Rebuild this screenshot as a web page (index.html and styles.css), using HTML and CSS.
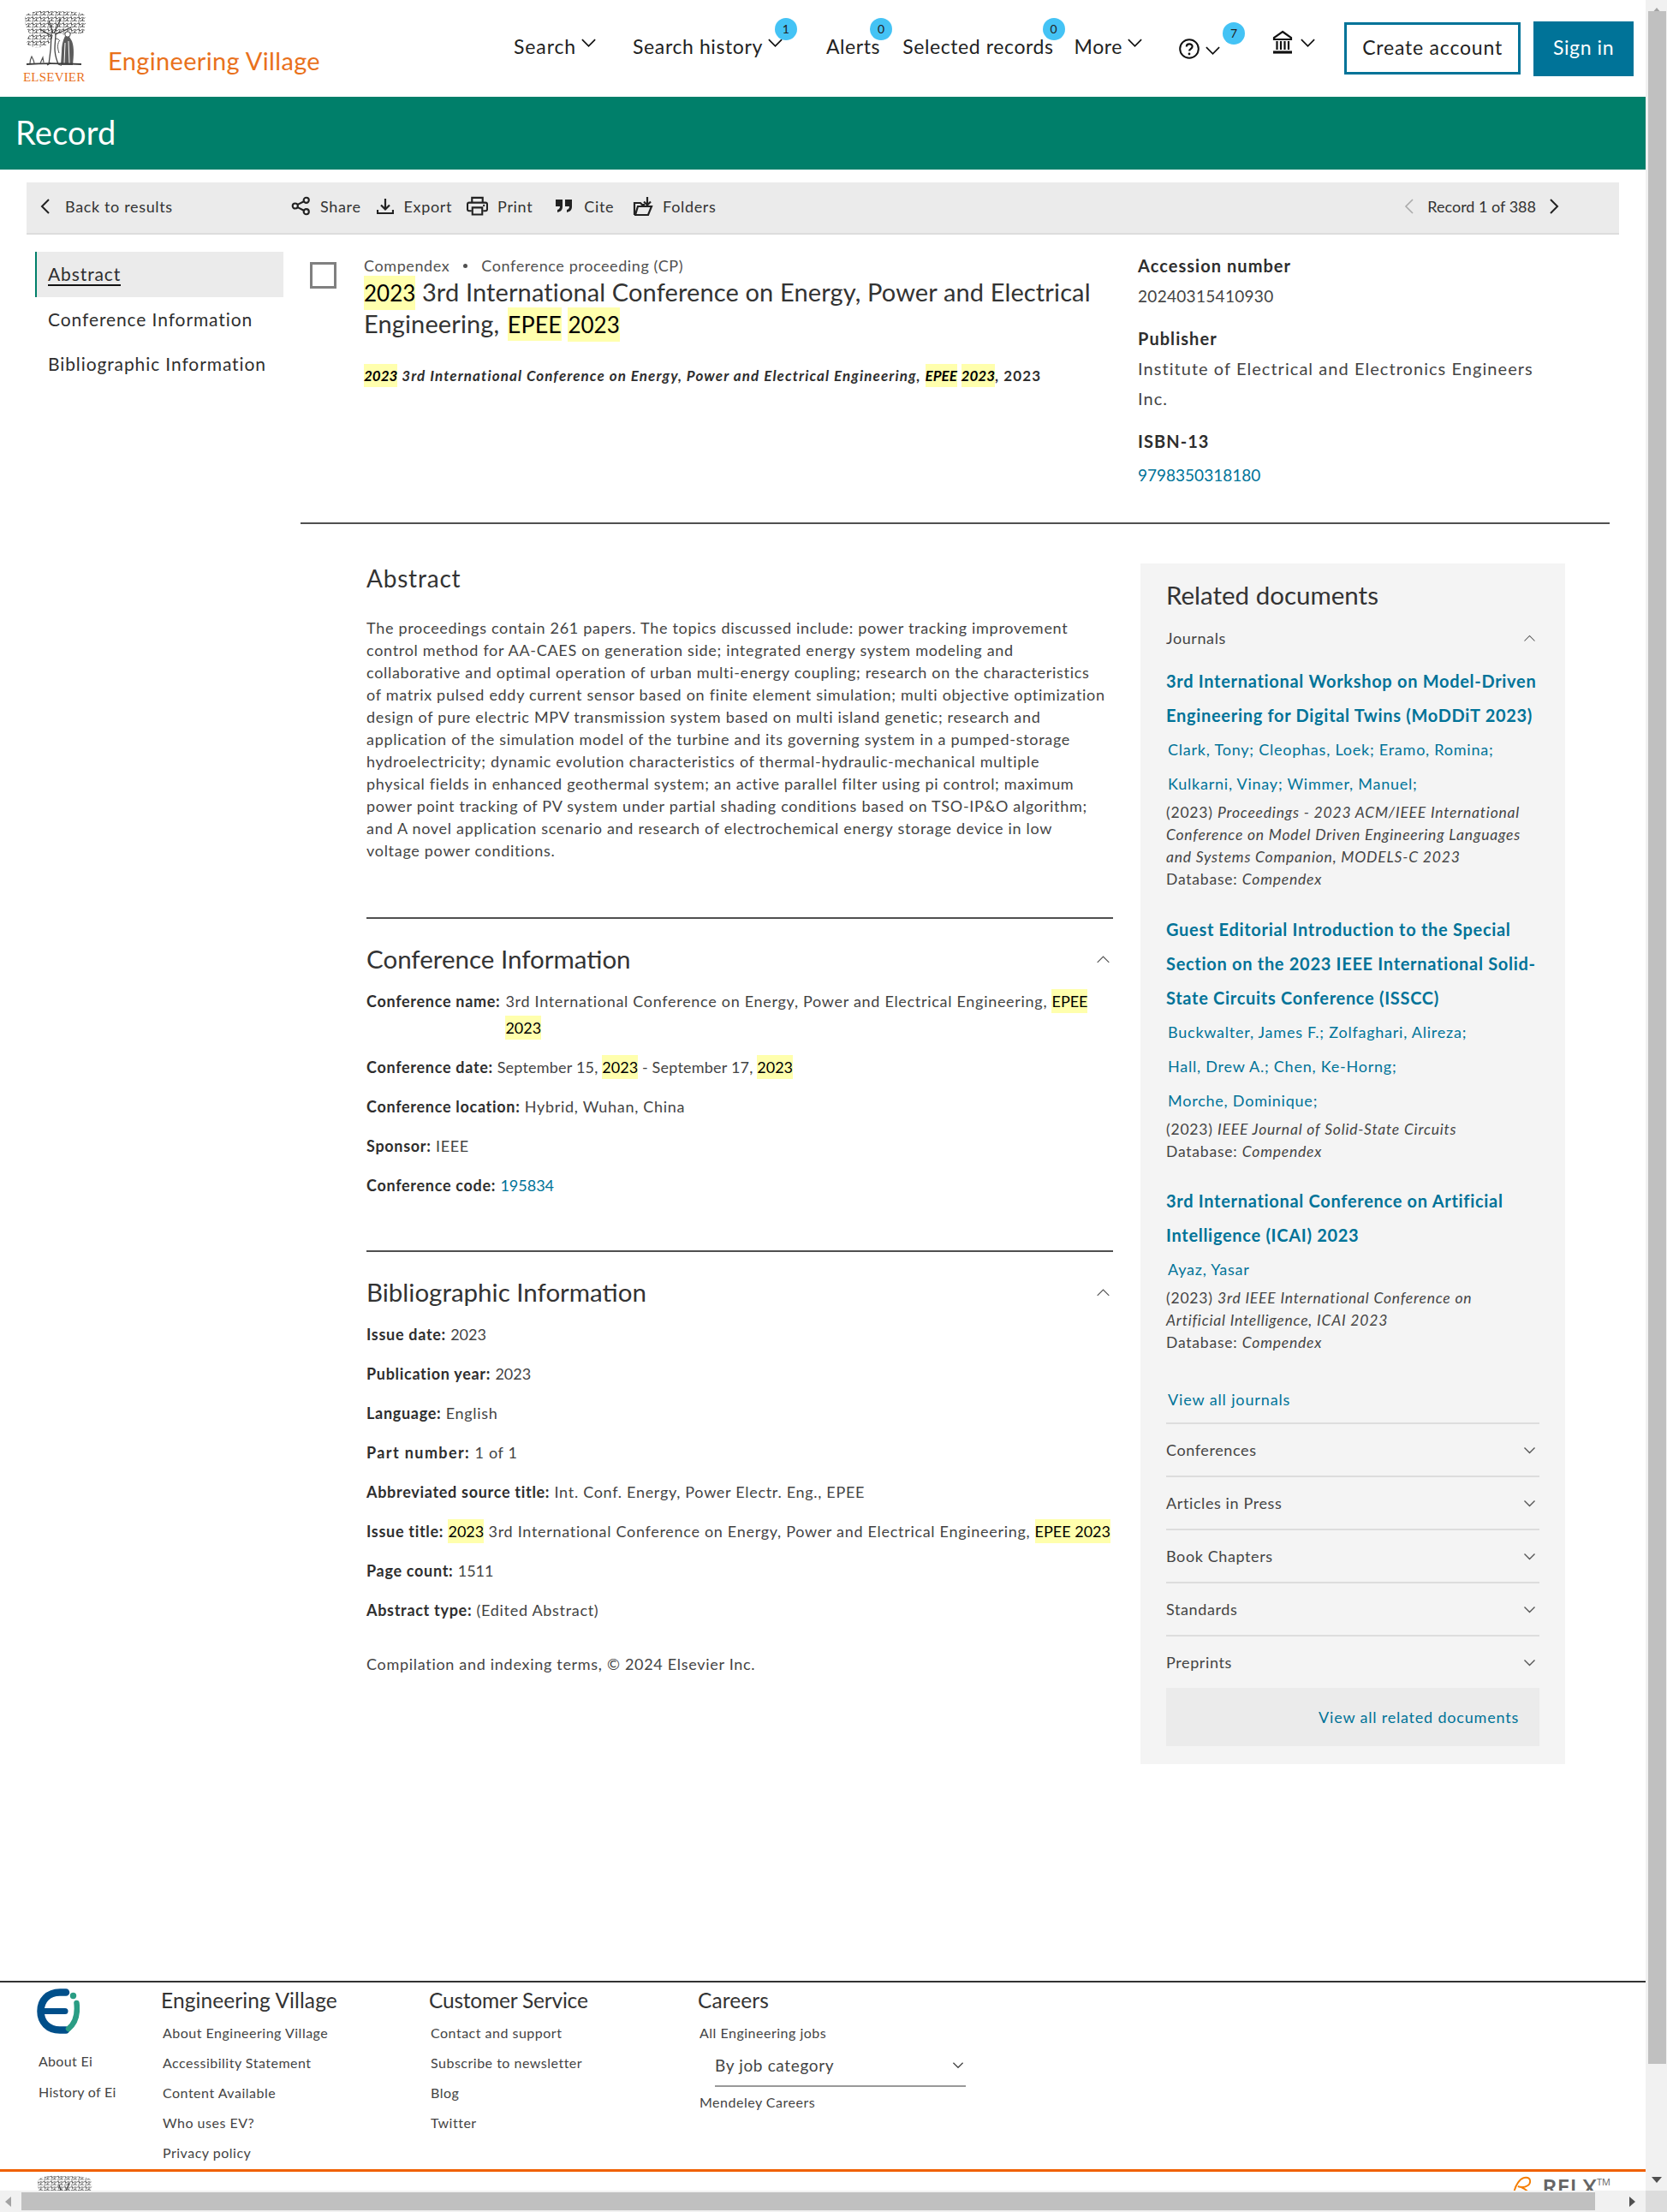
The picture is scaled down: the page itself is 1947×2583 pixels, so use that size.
FILE: index.html
```html
<!DOCTYPE html>
<html lang="en">
<head>
<meta charset="utf-8">
<title>Record - Engineering Village</title>
<link rel="stylesheet" href="styles.css">
</head>
<body>
<svg class="defs" width="0" height="0" aria-hidden="true">
  <defs>
    <pattern id="scribble" width="9" height="7" patternUnits="userSpaceOnUse">
      <path d="M0 2c2-2 3 2 5 0s3 1 4 0M1 6c2-2 3 1 4-1s3 2 4 0M2 0l1 4M7 2l-1 4" fill="none" stroke="#4d4d4d" stroke-width="1"/>
    </pattern>
  </defs>
  <symbol id="chev-d" viewBox="0 0 20 12"><path d="M2 2l8 8 8-8" fill="none" stroke="currentColor" stroke-width="1.8"/></symbol>
  <symbol id="chev-u" viewBox="0 0 20 12"><path d="M2 10l8-8 8 8" fill="none" stroke="currentColor" stroke-width="1.4"/></symbol>
  <symbol id="tree" viewBox="0 0 74 66">
    <path d="M3 6C8 1 20 0 34 1s32-1 38 5c2 8 1 15-1 20-8 3-16 1-22 3-6-1-10 0-14 0-2 6-3 10-10 13-7 2-17 2-20-2-2-5 1-9 3-12C4 22 1 14 3 6z" fill="url(#scribble)"/>
    <g fill="none" stroke="#444" stroke-width="1.300">
      <path d="M35 27L30 12M36 27L44 10M33 30L20 22M38 28L56 20"/>
      <path d="M30 63c2-12 3-24 3-36M41 63c-2-6-4-10-4-18 0-6 1-12 1-18"/>
      <path d="M28 64c2-1 3-1 4-3M41 63c2 1 3 1 4 1"/>
    </g>
    <path d="M49 30c-3 6-4 12-4 18l-1 16h14c1-10 2-20-1-28l-3-5z" fill="#5c5c5c"/>
    <path d="M49 38l-1 24M53 36l1 26" stroke="#fff" stroke-width="1"/>
    <circle cx="52" cy="28" r="3.200" fill="#fff" stroke="#444" stroke-width="1"/>
    <path d="M42 36c-2 4-2 8 0 14M37 33c3 0 5 1 6 3" fill="none" stroke="#555" stroke-width="1"/>
    <path d="M4 63c14-1 44-1 64 0" fill="none" stroke="#3d3d3d" stroke-width="1.800"/>
    <path d="M8 62c0-4 1-6 2-8 1 2 3 5 3 8M20 62l3-7 1 6" fill="none" stroke="#555" stroke-width="1.200"/>
  </symbol>
</svg>
<div class="shell">
  <div class="page">
    <header class="top">
      <a class="brand">
        <span class="brand-mark">
          <svg class="tree" width="74" height="66"><use href="#tree"/></svg>
          <span class="brand-els">ELSEVIER</span>
        </span>
        <span class="brand-name">Engineering Village</span>
      </a>
      <nav class="nav">
        <span class="nav-item nav-search">Search<svg class="nav-chev"><use href="#chev-d"/></svg></span>
        <span class="nav-item nav-history">Search history<svg class="nav-chev"><use href="#chev-d"/></svg><span class="badge badge-a">1</span></span>
        <span class="nav-item nav-alerts">Alerts<span class="badge badge-b">0</span></span>
        <span class="nav-item nav-selected">Selected records<span class="badge badge-c">0</span></span>
        <span class="nav-item nav-more">More<svg class="nav-chev"><use href="#chev-d"/></svg></span>
        <span class="nav-item nav-help">
          <svg class="help-ico" viewBox="0 0 24 24" width="24" height="24"><circle cx="12" cy="12" r="10.800" fill="none" stroke="#111" stroke-width="2"/><path d="M8.800 9.500c0-4.200 6.800-4.200 6.800-.2 0 2.700-3.500 2.800-3.500 5.200" fill="none" stroke="#111" stroke-width="2.200"/><circle cx="12" cy="18" r="1.400" fill="#111"/></svg>
          <svg class="nav-chev help-chev"><use href="#chev-d"/></svg><span class="badge badge-d">7</span>
        </span>
        <span class="nav-item nav-inst">
          <svg class="inst-ico" viewBox="0 0 24 28" width="24" height="28"><path d="M12 2L22 9v2H2V9z" fill="none" stroke="#111" stroke-width="2.200"/><path d="M5.500 13v10M10 13v10M14.500 13v10M19 13v10" stroke="#111" stroke-width="2.200"/><path d="M1 26h22" stroke="#111" stroke-width="3.200"/></svg>
          <svg class="nav-chev"><use href="#chev-d"/></svg>
        </span>
        <a class="btn-create">Create account</a>
        <a class="btn-signin">Sign in</a>
      </nav>
    </header>

    <div class="band"><h1 class="band-title">Record</h1></div>

    <div class="toolbar">
      <a class="tool tool-back"><svg viewBox="0 0 12 20" width="12" height="20"><path d="M10 2L2 10l8 8" fill="none" stroke="#222" stroke-width="2"/></svg><span>Back to results</span></a>
      <a class="tool tool-share">
        <svg viewBox="0 0 24 24" width="23" height="23"><g fill="none" stroke="#222" stroke-width="2.200"><circle cx="18.500" cy="5" r="3.200"/><circle cx="5" cy="12" r="3.200"/><circle cx="18.500" cy="19" r="3.200"/><path d="M8 10.300l7.500-3.800M8 13.700l7.500 3.800"/></g></svg><span>Share</span></a>
      <a class="tool tool-export">
        <svg viewBox="0 0 20 20" width="20" height="20"><g fill="none" stroke="#222" stroke-width="2.200"><path d="M10 1v12M5 8.500l5 5 5-5"/><path d="M1 14v4h18v-4"/></g></svg><span>Export</span></a>
      <a class="tool tool-print">
        <svg viewBox="0 0 26 24" width="25" height="23"><g fill="none" stroke="#222" stroke-width="2.200"><path d="M6.500 8V2h13v6M6 18H3q-2 0-2-2v-6q0-2 2-2h20q2 0 2 2v6q0 2-2 2h-3"/><path d="M7 14h12v8.500H7z"/></g><circle cx="21" cy="11.500" r="1.200" fill="#222"/></svg><span>Print</span></a>
      <a class="tool tool-cite">
        <svg viewBox="0 0 22 20" width="22" height="20"><path d="M1 2h8v8c0 4-2 6-6 7v-3c2-.5 3-2 3-4H1zM12 2h8v8c0 4-2 6-6 7v-3c2-.5 3-2 3-4h-5z" fill="#222"/></svg><span>Cite</span></a>
      <a class="tool tool-folders">
        <svg viewBox="0 0 24 24" width="24" height="24"><g fill="none" stroke="#222" stroke-width="2.200"><path d="M2 22V8h7l2 2h3M2 22h16l4-10H6L3 22"/><path d="M17 1v9M13 6.500l4 4 4-4"/></g></svg><span>Folders</span></a>
      <div class="pager">
        <svg viewBox="0 0 12 20" width="12" height="20"><path d="M10 2L2 10l8 8" fill="none" stroke="#aaa" stroke-width="1.600"/></svg>
        <span class="pager-text">Record 1 of 388</span>
        <svg viewBox="0 0 12 20" width="12" height="20"><path d="M2 2l8 8-8 8" fill="none" stroke="#222" stroke-width="2"/></svg>
      </div>
    </div>

    <main class="main">
      <section class="record">
        <ul class="side">
          <li class="side-item side-on"><span class="side-link">Abstract</span></li>
          <li class="side-item">Conference Information</li>
          <li class="side-item">Bibliographic Information</li>
        </ul>
        <span class="check"></span>
        <div class="rec-main">
          <p class="rec-type"><span>Compendex</span><span class="rec-dot"></span><span>Conference proceeding (CP)</span></p>
          <h2 class="rec-title"><mark class="digits">2023</mark> 3rd International Conference on Energy, Power and Electrical Engineering, <mark class="caps">EPEE</mark> <mark class="digits">2023</mark></h2>
          <p class="rec-src"><mark>2023</mark> 3rd International Conference on Energy, Power and Electrical Engineering, <mark>EPEE</mark> <mark>2023</mark><span class="rec-year">, 2023</span></p>
        </div>
        <dl class="rec-facts">
          <dt>Accession number</dt><dd class="accession">20240315410930</dd>
          <dt>Publisher</dt><dd>Institute of Electrical and Electronics Engineers Inc.</dd>
          <dt>ISBN-13</dt><dd class="isbn"><a class="link">9798350318180</a></dd>
        </dl>
      </section>
      <hr class="rule">
      <section class="content">
        <article class="left">
          <h3 class="abs-head">Abstract</h3>
          <p class="abs-text">The proceedings contain 261 papers. The topics discussed include: power tracking improvement control method for AA-CAES on generation side; integrated energy system modeling and<br>collaborative and optimal operation of urban multi-energy coupling; research on the characteristics<br>of matrix pulsed eddy current sensor based on finite element simulation; multi objective optimization<br>design of pure electric MPV transmission system based on multi island genetic; research and<br>application of the simulation model of the turbine and its governing system in a pumped-storage<br>hydroelectricity; dynamic evolution characteristics of thermal-hydraulic-mechanical multiple<br>physical fields in enhanced geothermal system; an active parallel filter using pi control; maximum<br>power point tracking of PV system under partial shading conditions based on TSO-IP&amp;O algorithm;<br>and A novel application scenario and research of electrochemical energy storage device in low<br>voltage power conditions.</p>

          <div class="sec">
            <div class="sec-head"><h3>Conference Information</h3><svg class="sec-chev"><use href="#chev-u"/></svg></div>
            <div class="row row-flex"><b>Conference name:</b><span>3rd International Conference on Energy, Power and Electrical Engineering, <mark>EPEE</mark> <mark>2023</mark></span></div>
            <div class="row row-date"><b>Conference date:</b> September 15, <mark>2023</mark> - September 17, <mark>2023</mark></div>
            <div class="row"><b>Conference location:</b> Hybrid, Wuhan, China</div>
            <div class="row"><b>Sponsor:</b> IEEE</div>
            <div class="row"><b>Conference code:</b> <a class="link num">195834</a></div>
          </div>

          <div class="sec sec-bib">
            <div class="sec-head"><h3>Bibliographic Information</h3><svg class="sec-chev"><use href="#chev-u"/></svg></div>
            <div class="row"><b>Issue date:</b> <span class="num">2023</span></div>
            <div class="row"><b>Publication year:</b> <span class="num">2023</span></div>
            <div class="row"><b>Language:</b> English</div>
            <div class="row"><b class="wide">Part number:</b> 1 of 1</div>
            <div class="row"><b>Abbreviated source title:</b> Int. Conf. Energy, Power Electr. Eng., EPEE</div>
            <div class="row"><b>Issue title:</b> <mark>2023</mark> 3rd International Conference on Energy, Power and Electrical Engineering, <mark>EPEE 2023</mark></div>
            <div class="row"><b>Page count:</b> <span class="num">1511</span></div>
            <div class="row"><b>Abstract type:</b> (Edited Abstract)</div>
            <p class="row copyright">Compilation and indexing terms, © 2024 Elsevier Inc.</p>
          </div>
        </article>

        <aside class="panel">
          <h3 class="panel-head">Related documents</h3>
          <div class="acc-open"><span>Journals</span><svg class="acc-chev"><use href="#chev-u"/></svg></div>

          <div class="doc">
            <a class="doc-title">3rd International Workshop on Model-Driven Engineering for Digital Twins (MoDDiT 2023)</a>
            <p class="doc-auth">Clark, Tony; Cleophas, Loek; Eramo, Romina;</p>
            <p class="doc-auth">Kulkarni, Vinay; Wimmer, Manuel;</p>
            <p class="doc-meta">(2023) <i>Proceedings - 2023 ACM/IEEE International Conference on Model Driven Engineering Languages<br>and Systems Companion, MODELS-C 2023</i><br>Database: <i>Compendex</i></p>
          </div>
          <div class="doc">
            <a class="doc-title">Guest Editorial Introduction to the Special Section on the 2023 IEEE International Solid-State Circuits Conference (ISSCC)</a>
            <p class="doc-auth">Buckwalter, James F.; Zolfaghari, Alireza;</p>
            <p class="doc-auth">Hall, Drew A.; Chen, Ke-Horng;</p>
            <p class="doc-auth">Morche, Dominique;</p>
            <p class="doc-meta">(2023) <i>IEEE Journal of Solid-State Circuits</i><br>Database: <i>Compendex</i></p>
          </div>
          <div class="doc">
            <a class="doc-title">3rd International Conference on Artificial Intelligence (ICAI) 2023</a>
            <p class="doc-auth">Ayaz, Yasar</p>
            <p class="doc-meta">(2023) <i>3rd IEEE International Conference on<br>Artificial Intelligence, ICAI 2023</i><br>Database: <i>Compendex</i></p>
          </div>
          <a class="link view-j">View all journals</a>
          <div class="acc"><span>Conferences</span><svg class="acc-chev"><use href="#chev-d"/></svg></div>
          <div class="acc"><span>Articles in Press</span><svg class="acc-chev"><use href="#chev-d"/></svg></div>
          <div class="acc"><span>Book Chapters</span><svg class="acc-chev"><use href="#chev-d"/></svg></div>
          <div class="acc"><span>Standards</span><svg class="acc-chev"><use href="#chev-d"/></svg></div>
          <div class="acc"><span>Preprints</span><svg class="acc-chev"><use href="#chev-d"/></svg></div>
          <div class="view-all"><a class="link">View all related documents</a></div>
        </aside>
      </section>
    </main>

    <footer class="foot">
      <div class="foot-cols">
        <div class="fc fc-ei">
          <svg class="ei" viewBox="0 0 50 53" width="50" height="53">
            <path d="M34 4.500H27C13 4.500 4.500 14 4.500 26.500S13 48.500 27 48.500h7" fill="none" stroke="#004f8a" stroke-width="8.500" stroke-linecap="round"/>
            <path d="M8 26.500h25" stroke="#004f8a" stroke-width="7" stroke-linecap="round"/>
            <circle cx="42.500" cy="8.500" r="3.700" fill="#2a9d84"/>
            <path d="M46.500 17c1.500 13-2 24-9.500 30" fill="none" stroke="#2a9d84" stroke-width="6.500" stroke-linecap="round"/>
          </svg>
          <a>About Ei</a><a>History of Ei</a>
        </div>
        <div class="fc fc-ev">
          <h4>Engineering Village</h4>
          <a>About Engineering Village</a><a>Accessibility Statement</a><a>Content Available</a><a>Who uses EV?</a><a>Privacy policy</a>
        </div>
        <div class="fc fc-cs">
          <h4>Customer Service</h4>
          <a>Contact and support</a><a>Subscribe to newsletter</a><a>Blog</a><a>Twitter</a>
        </div>
        <div class="fc fc-ca">
          <h4>Careers</h4>
          <a>All Engineering jobs</a>
          <div class="job-sel"><span>By job category</span><svg class="job-chev"><use href="#chev-d"/></svg></div>
          <a class="fc-after">Mendeley Careers</a>
        </div>
      </div>
      <div class="foot-strip">
        <svg class="strip-tree" width="66" height="59"><use href="#tree"/></svg>
        <span class="relx">
          <svg viewBox="0 0 30 30" width="26" height="26"><path d="M3 26C5 12 12 2 20 2c7 0 7 8 2 11s-10 2-13 1c5 1 12 4 18 12" fill="none" stroke="#f57d00" stroke-width="2.200"/></svg>
          <span class="relx-t">RELX<sup>TM</sup></span>
        </span>
      </div>
    </footer>
  </div>

  <div class="vbar">
    <span class="arrow arrow-up"></span>
    <span class="vthumb"></span>
    <span class="arrow arrow-down"></span>
  </div>
  <div class="hbar">
    <span class="arrow arrow-left"></span>
    <span class="hthumb"></span>
    <span class="arrow arrow-right"></span>
  </div>
  <div class="corner"></div>
</div>
</body>
</html>
```

FILE: styles.css
```css
* { box-sizing: border-box; }
html, body { margin: 0; padding: 0; height: 100%; overflow: hidden; }
body { font-family: Lato, "Open Sans", sans-serif; color: #2e2e2e; background: #fff; }
.defs { position: absolute; }
h1, h2, h3, h4, p, ul, dl, dd { margin: 0; padding: 0; font-weight: 400; }
ul { list-style: none; }
a { color: inherit; text-decoration: none; }
mark { background: #ffffad; color: #000; padding: 3px 0; letter-spacing: 0; }
.link { color: #007398; }
.num { letter-spacing: 0; }

.shell { display: grid; grid-template-columns: 1fr 25px; grid-template-rows: 1fr 25px; width: 1947px; height: 2583px; }
.page { display: flex; flex-direction: column; overflow: hidden; min-width: 0; min-height: 0; }

/* header */
.top { display: flex; flex: none; height: 113px; }
.brand { display: flex; flex: none; width: 590px; padding: 12px 0 0 27px; }
.brand-mark { display: flex; flex-direction: column; width: 74px; }
.tree { display: block; }
.brand-els { font: 15px/18px "Liberation Serif", serif; color: #e9711c; margin-top: 3px; letter-spacing: .2px; white-space: nowrap; }
.brand-name { font-size: 29px; line-height: 36px; color: #e9711c; margin: 41px 0 0 25px; letter-spacing: .35px; white-space: nowrap; }
.nav { display: flex; align-items: flex-start; flex: 1; font-size: 23px; letter-spacing: .6px; color: #222; padding-top: 38px; }
.nav-item { position: relative; display: flex; flex: none; line-height: 32px; white-space: nowrap; }
.nav-chev { width: 19px; height: 12px; margin: 6px 0 0 5px; color: #111; }
.nav-search { margin-left: 10px; letter-spacing: .9px; }
.nav-history { margin-left: 42px; }
.nav-alerts { margin-left: 50px; }
.nav-selected { margin-left: 26px; }
.nav-more { margin-left: 24px; }
.nav-help { margin-left: 42px; padding-top: 7px; }
.help-chev { margin: 8px 0 0 6px; }
.nav-inst { margin-left: 60px; }
.inst-ico { margin-top: -3px; }
.nav-inst .nav-chev { margin: 6px 0 0 8px; }
.badge { position: absolute; width: 26px; height: 26px; border-radius: 50%; background: #44c3f5; color: #222; font-size: 14px; letter-spacing: 0; line-height: 26px; text-align: center; }
.badge-a { top: -17px; right: -16px; }
.badge-b { top: -17px; right: -14px; }
.badge-c { top: -17px; right: -13px; }
.badge-d { top: -12px; right: -28px; }
.btn-create { flex: none; width: 206px; height: 61px; margin: -12px 0 0 33px; border: 3px solid #007398; line-height: 52px; letter-spacing: .8px; text-align: center; color: #222; }
.btn-signin { flex: none; width: 117px; height: 64px; margin: -13px 0 0 15px; background: #007398; color: #fff; line-height: 61px; text-align: center; }

.band { flex: none; height: 85px; background: #007f6a; padding-left: 18px; }
.band-title { color: #fff; font-size: 38px; line-height: 82px; letter-spacing: .2px; }

/* toolbar */
.toolbar { display: flex; align-items: center; flex: none; width: 1860px; height: 61px; margin: 15px 0 0 31px; padding-bottom: 4px; background: #ebebeb; border-bottom: 2px solid #ddd; font-size: 18px; letter-spacing: .65px; color: #333; }
.tool { display: flex; align-items: center; gap: 11px; flex: none; white-space: nowrap; }
.tool-back { margin-left: 16px; width: 293px; gap: 17px; }
.tool-export { margin-left: 18px; gap: 12px; }
.tool-print { margin-left: 17px; }
.tool-cite { margin-left: 26px; gap: 12px; }
.tool-folders { margin-left: 22px; }
.pager { display: flex; align-items: center; gap: 15px; margin-left: auto; margin-right: 70px; letter-spacing: 0; }

/* record head */
.main { flex: 1; min-height: 0; }
.record { display: flex; height: 336px; padding: 20px 0 0 41px; }
.side { flex: none; width: 290px; font-size: 21px; letter-spacing: .9px; }
.side-item { height: 52.5px; line-height: 52px; padding-left: 15px; }
.side-on { background: #ebebeb; border-left: 2px solid #007f6a; padding-left: 13px; }
.side-link { border-bottom: 2px solid #111; }
.check { flex: none; width: 31px; height: 31px; margin: 12px 0 0 31px; border: 3px solid #808080; }
.rec-main { flex: none; width: 880px; margin-left: 32px; }
.rec-type { display: flex; align-items: center; font-size: 18px; line-height: 22px; letter-spacing: .6px; color: #505050; margin-top: 5px; }
.rec-dot { width: 5px; height: 5px; margin: 0 16px; border-radius: 50%; background: #505050; }
.rec-title { font-size: 29px; line-height: 36px; letter-spacing: .13px; margin-top: 2px; color: #333; }
.rec-title mark { padding: 2px 0; }
.rec-title .digits { font-size: 26px; padding: 4px 0; }
.rec-title .caps { font-size: 27px; padding: 3px 0; margin-left: 2px; }
.rec-src { font-size: 17px; line-height: 22px; letter-spacing: 1.100px; margin-top: 31px; font-weight: 700; font-style: italic; color: #2e2e2e; white-space: nowrap; }
.rec-year { font-style: normal; }
.rec-facts { flex: none; width: 480px; margin-left: 24px; font-size: 20px; letter-spacing: 1.050px; line-height: 35px; color: #444; }
.rec-facts dt { font-weight: 700; line-height: 26px; margin-top: 3px; color: #2e2e2e; }
.rec-facts dd { margin-bottom: 19px; margin-top: 5px; }
.rec-facts .accession { font-size: 19px; letter-spacing: .3px; }
.rec-facts .isbn { font-size: 19px; letter-spacing: 0; margin-top: 9px; }
.rule { height: 2px; width: 1529px; margin: 0 0 0 351px; background: #505050; border: 0; }

/* content */
.content { display: flex; padding: 46px 0 0 428px; align-items: flex-start; }
.left { flex: none; width: 872px; }
.abs-head { font-size: 28px; line-height: 34px; letter-spacing: .8px; color: #333; }
.abs-text { font-size: 18px; line-height: 26px; letter-spacing: .7px; margin-top: 28px; color: #444; }
.sec { margin-top: 65px; border-top: 2px solid #505050; padding-top: 29px; }
.sec-bib { margin-top: 60px; }
.sec-head { display: flex; align-items: center; justify-content: space-between; height: 36px; margin-bottom: 16px; }
.sec-head h3 { font-size: 29.500px; line-height: 36px; color: #333; }
.sec-chev { width: 17px; height: 11px; margin-right: 3px; color: #555; }
.row { font-size: 18px; line-height: 31px; letter-spacing: .7px; margin-bottom: 15px; color: #444; }
.row b { color: #2e2e2e; letter-spacing: .7px; }
.row b.wide { letter-spacing: 1.400px; }
.row-date { letter-spacing: .2px; }
.row-flex { display: flex; gap: 6px; }
.row-flex b { flex: none; }
.copyright { margin-top: 32px; }

/* panel */
.panel { flex: none; width: 496px; margin-left: 32px; padding: 20px 30px 21px; background: #f4f4f4; }
.panel-head { font-size: 29.500px; line-height: 34px; color: #333; }
.acc-open { display: flex; justify-content: space-between; align-items: center; height: 34px; margin-top: 16px; font-size: 18px; letter-spacing: .6px; color: #444; }
.acc-chev { width: 15px; height: 9px; margin-right: 4px; color: #555; }
.doc { margin-top: 13px; margin-bottom: 24.500px; }
.doc-title { display: block; font-size: 20px; line-height: 40px; letter-spacing: .7px; font-weight: 700; color: #007398; }
.doc-auth { font-size: 18px; line-height: 40px; letter-spacing: .77px; color: #007398; margin-left: 2px; white-space: nowrap; }
.doc-meta { font-size: 17.500px; line-height: 26px; letter-spacing: .8px; margin-top: 1px; color: #444; white-space: nowrap; }
.doc-meta i { white-space: normal; }
.doc + .doc { margin-top: 0; }
.view-j { display: block; font-size: 18px; line-height: 26px; letter-spacing: .87px; margin: 40px 0 14px 2px; }
.doc:last-of-type { margin-bottom: 0; }
.acc { display: flex; justify-content: space-between; align-items: center; height: 62px; border-top: 2px solid #ddd; font-size: 18px; letter-spacing: .6px; color: #444; }
.view-all { height: 68px; background: #ebebeb; text-align: right; padding-right: 24px; font-size: 18px; letter-spacing: .8px; line-height: 68px; }

/* footer */
.foot { flex: none; height: 245px; border-top: 2px solid #333; overflow: hidden; }
.foot-cols { display: flex; height: 218px; padding-left: 43px; }
.fc { flex: none; display: flex; flex-direction: column; font-size: 16px; letter-spacing: .5px; color: #444; white-space: nowrap; }
.fc a { line-height: 35px; margin-left: 2px; }
.fc h4 { font-size: 24.500px; line-height: 30px; letter-spacing: .1px; margin: 6px 0 5px; color: #333; }
.fc-cs h4 { letter-spacing: -.2px; }
.fc-ei { width: 145px; padding-top: 7px; letter-spacing: .3px; }
.ei { flex: none; margin-bottom: 14px; }
.fc-ei a { line-height: 36px; }
.fc-ev { width: 313px; }
.fc-cs { width: 314px; }
.fc-ca { width: 313px; }
.job-sel { display: flex; justify-content: space-between; align-items: center; width: 293px; height: 46px; margin: 0 0 0 20px; padding: 0 2px 4px 0; border-bottom: 2px solid #999; font-size: 19px; letter-spacing: .65px; }
.job-chev { width: 14px; height: 9px; color: #444; }
.foot-strip { display: flex; justify-content: space-between; height: 25px; border-top: 3px solid #f06000; overflow: hidden; }
.strip-tree { flex: none; margin: 4px 0 0 42px; }
.relx { display: flex; gap: 10px; margin: 3px 41px 0 0; }
.relx svg { flex: none; margin-top: 2px; }
.relx-t { font-size: 27px; line-height: 30px; font-weight: 600; color: #666; font-family: "Open Sans", sans-serif; }
.relx-t sup { font-size: 11px; font-weight: 400; vertical-align: 12px; line-height: 0; }

/* fake scrollbars */
.vbar { display: flex; flex-direction: column; align-items: center; justify-content: space-between; background: #f1f1f1; padding: 0 0 0 1px; }
.hbar { display: flex; align-items: center; background: #f1f1f1; }
.corner { background: #dcdcdc; }
.vthumb { display: block; width: 21px; height: 2397px; margin-top: -11px; margin-bottom: 124px; background: #c0c0c0; }
.hthumb { display: block; width: 1838px; height: 21px; background: #c0c0c0; }
.arrow { width: 0; height: 0; border: 6px solid transparent; flex: none; }
.arrow-up { border-bottom: 7px solid #a3a3a3; border-top: 0; margin-top: 9px; }
.arrow-down { border-top: 7px solid #505050; border-bottom: 0; margin-bottom: 9px; }
.arrow-left { border-right: 7px solid #a3a3a3; border-left: 0; margin: 0 12px 0 6px; }
.arrow-right { border-left: 7px solid #505050; border-right: 0; margin-left: 40px; }
```
